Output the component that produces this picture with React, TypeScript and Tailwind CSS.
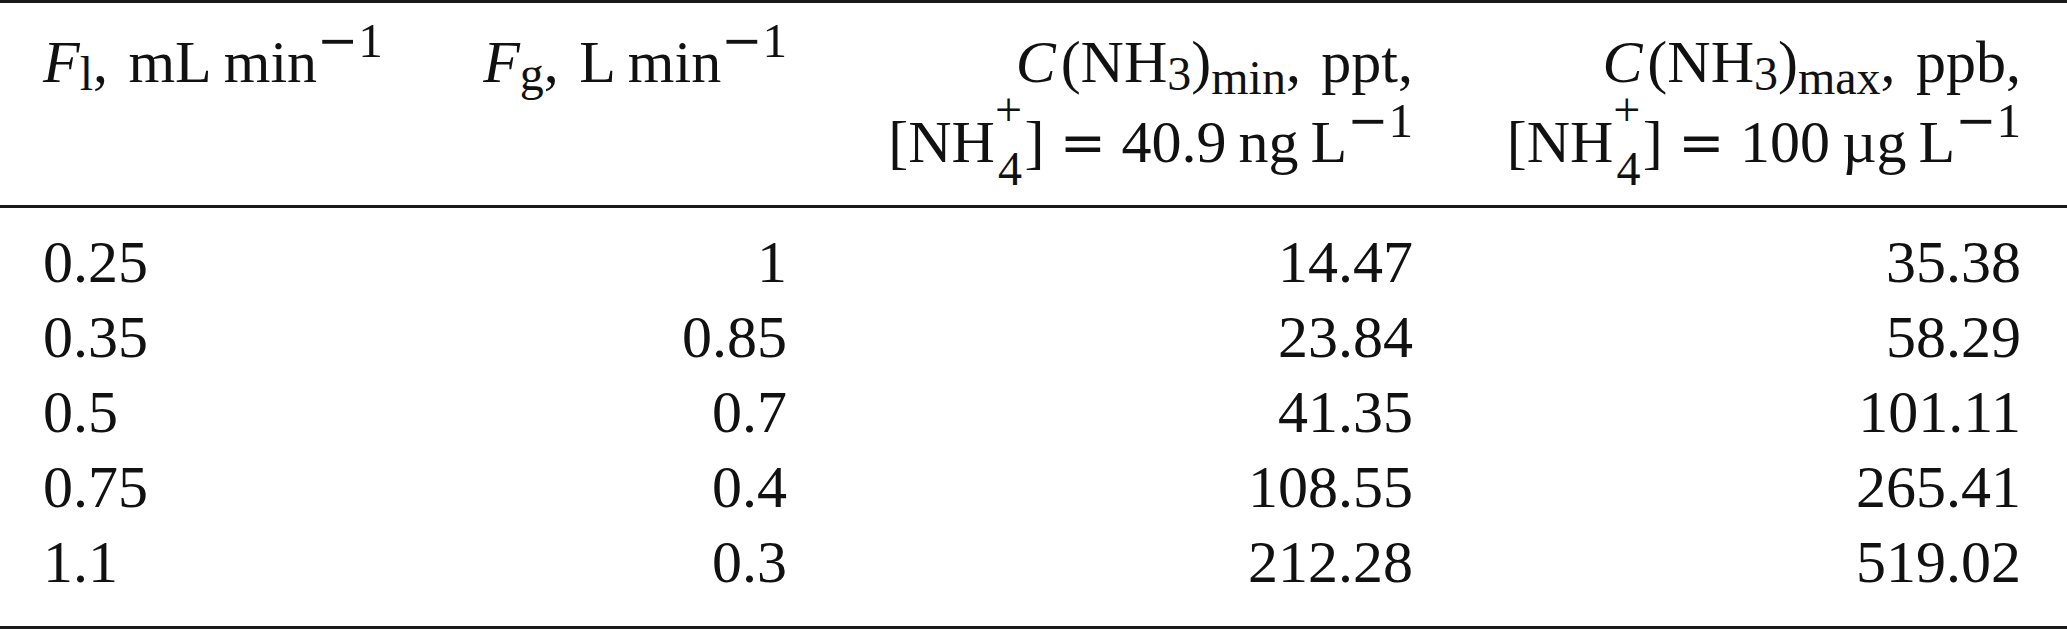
import React from 'react';

// small math helpers, kept inline so the text stays real text
const Sub = ({ children, low = false }: { children: React.ReactNode; low?: boolean }) => (
  <span className={`text-[0.8em] leading-[0] ${low ? 'align-[-0.24em]' : 'align-[-0.17em]'}`}>{children}</span>
);

// TeX's minus is much wider than the text one, DejaVu's is close
const Minus = () => <span className="font-['DejaVu_Serif',serif]">−</span>;

const Sup = ({ children }: { children: React.ReactNode }) => (
  <span className="text-[0.82em] leading-[0] align-[0.5em]">
    <Minus />
    {children}
  </span>
);

const Gap = ({ w }: { w: 'thin' | 'med' }) => (
  <span className={`inline-block ${w === 'thin' ? 'w-[0.2em]' : 'w-[0.34em]'}`} />
);

const Eq = () => <span className="font-['DejaVu_Serif',serif] text-[0.92em] mx-[0.28em]">=</span>;

// NH4+ : charge stacked over the count
const Ammonium = () => (
  <>
    [NH
    <span className="inline-flex flex-col gap-y-[59px] text-[0.8em] align-[0.75em] mr-[0.05em]">
      <span className="leading-[0]">+</span>
      <span className="leading-[0]">4</span>
    </span>
    ]
  </>
);

const Conc = ({ sub, unit }: { sub: string; unit: string }) => (
  <div>
    <i className="mr-[0.08em]">C</i>(NH<Sub>3</Sub>)<Sub low>{sub}</Sub>,<Gap w="med" />
    {unit},
  </div>
);

const rows = [
  ['0.25', '1', '14.47', '35.38'],
  ['0.35', '0.85', '23.84', '58.29'],
  ['0.5', '0.7', '41.35', '101.11'],
  ['0.75', '0.4', '108.55', '265.41'],
  ['1.1', '0.3', '212.28', '519.02'],
];

const cols = 'grid grid-cols-[340px_404px_626px_608px] pl-[43px] pr-[46px]';

export default function App() {
  return (
    <div className="w-[2067px] h-[629px] bg-white text-[#111] font-['Liberation_Serif',serif] text-[60px]">
      <div className="h-[3px] bg-[#1a1a1a]" />

      {/* header */}
      <div className={`${cols} leading-[80px] pt-[19px] pb-[22px] whitespace-nowrap`}>
        <div>
          <i>F</i>
          <Sub>l</Sub>,<Gap w="med" />mL<Gap w="thin" />min<Sup>1</Sup>
        </div>
        <div className="text-right">
          <i>F</i>
          <Sub>g</Sub>,<Gap w="med" />L<Gap w="thin" />min<Sup>1</Sup>
        </div>
        <div className="text-right">
          <Conc sub="min" unit="ppt" />
          <div>
            <Ammonium />
            <Eq />
            40.9<Gap w="thin" />ng<Gap w="thin" />L<Sup>1</Sup>
          </div>
        </div>
        <div className="text-right">
          <Conc sub="max" unit="ppb" />
          <div>
            <Ammonium />
            <Eq />
            100<Gap w="thin" />µg<Gap w="thin" />L<Sup>1</Sup>
          </div>
        </div>
      </div>

      <div className="h-[3px] bg-[#1a1a1a]" />

      {/* body */}
      <div className="pt-[17px] pb-[26px] leading-[75px]">
        {rows.map((r) => (
          <div key={r[0]} className={cols}>
            <div>{r[0]}</div>
            <div className="text-right">{r[1]}</div>
            <div className="text-right">{r[2]}</div>
            <div className="text-right">{r[3]}</div>
          </div>
        ))}
      </div>

      <div className="h-[3px] bg-[#1a1a1a]" />
    </div>
  );
}
